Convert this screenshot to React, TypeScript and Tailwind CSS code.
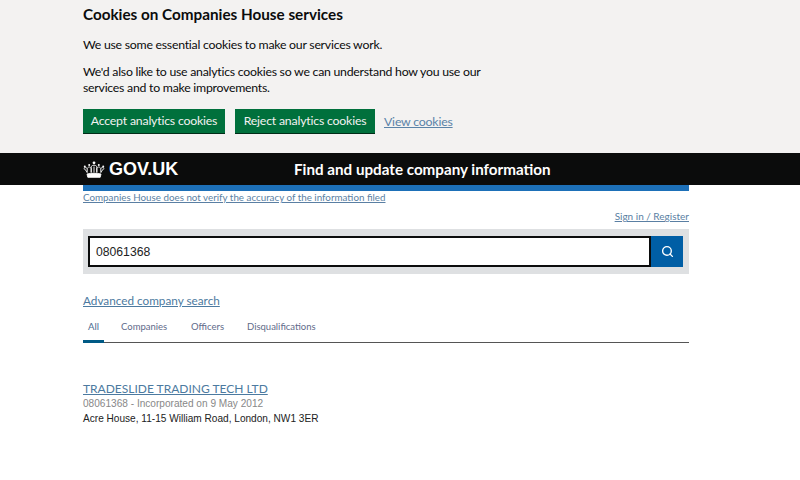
import { Search } from "lucide-react";

const GDS = { fontFamily: "Lato, 'Liberation Sans', sans-serif" };
const ARIAL = { fontFamily: "'Liberation Sans', Arial, sans-serif" };

function Crown() {
    return (
        <svg width="22" height="18" viewBox="0 0 22 18" fill="none" stroke="white" strokeWidth="0.9">
            <path d="M4 12.500C3 10.500 2 9 .8 8.500c.8-1.200 2.500-1.200 3.400 0M18 12.500c1-2 2-3.500 3.200-4-.8-1.200-2.500-1.200-3.400 0" />
            <path d="M4 14c4-1 10-1 14 0l-.8 3.300H4.800z" fill="white" />
            <path d="M4.200 12.500V8.500c1.200-2 2.800-2 4 0v4M8.200 12.500V6.500c1.500-1.800 4.100-1.800 5.600 0v6M13.800 12.500V8.500c1.200-2 2.800-2 4 0v4M11 6.500v6" />
            <circle cx="11" cy="2.800" r="1.400" fill="white" stroke="none" />
            <circle cx="6.200" cy="5" r="1" fill="white" stroke="none" />
            <circle cx="15.800" cy="5" r="1" fill="white" stroke="none" />
            <circle cx="1.800" cy="6.500" r="1" fill="white" stroke="none" />
            <circle cx="20.200" cy="6.500" r="1" fill="white" stroke="none" />
        </svg>
    );
}

function CookieBanner() {
    return (
        <div className="h-[153px] bg-[#f3f2f1] pl-[83px] pt-[4px] text-[#0b0c0c]" style={GDS}>
            <h2 className="text-[15.25px] leading-[20px] font-bold">Cookies on Companies House services</h2>
            <p className="mt-[11px] text-[12.3px] leading-[20px] tracking-[-0.25px]">We use some essential cookies to make our services work.</p>
            <p className="mt-[9px] w-[400px] text-[12.3px] leading-[16px] tracking-[-0.25px]">
                We'd also like to use analytics cookies so we can understand how you use our services and to make improvements.
            </p>
            <div className="mt-[13px] flex items-start text-[12.3px] tracking-[-0.2px]">
                <button className="h-[24px] w-[142px] whitespace-nowrap bg-[#00703c] pt-[1px] text-[#f3f2f1] shadow-[0_1px_0_#002d18]">Accept analytics cookies</button>
                <button className="ml-[10px] h-[24px] w-[140px] whitespace-nowrap bg-[#00703c] pt-[1px] text-[#f3f2f1] shadow-[0_1px_0_#002d18]">Reject analytics cookies</button>
                <a className="ml-[9px] leading-[26px] text-[#5a83a8] underline">View cookies</a>
            </div>
        </div>
    );
}

function Header() {
    return (
        <div className="flex h-[32px] items-center bg-[#0b0c0c] pl-[83px] text-white" style={GDS}>
            <div className="flex w-[211px] items-center gap-[4px]">
                <Crown />
                <span className="text-[18px] font-bold" style={ARIAL}>GOV.UK</span>
            </div>
            <span className="text-[15.2px] font-bold">Find and update company information</span>
        </div>
    );
}

export default function App() {
    return (
        <div className="h-[480px] w-[800px] overflow-hidden bg-white">
            <CookieBanner />
            <Header />
            <div className="w-[606px] ml-[83px]" style={GDS}>
                <div className="h-[6px] bg-[#1d70b8]" />
                <a className="block text-[9.8px] leading-[12px] text-[#5a7fa3] underline">Companies House does not verify the accuracy of the information filed</a>
                <div className="mt-[6px] text-right text-[10px] leading-[14px]">
                    <a className="text-[#5a7fa3] underline">Sign in / Register</a>
                </div>
                <div className="mt-[6px] flex h-[45px] items-center bg-[#dee0e2] px-[5px]">
                    <div className="flex h-[31px] flex-1 items-center border-2 border-[#0b0c0c] bg-white pl-[6px] pt-[1px] text-[12.2px] text-[#222]" style={ARIAL}>08061368</div>
                    <div className="flex h-[31px] w-[32px] items-center justify-center bg-[#005ea5]">
                        <Search size={13} strokeWidth={2.500} className="text-white" />
                    </div>
                    <div className="w-[1px]" />
                </div>
                <a className="mt-[19px] block text-[11.75px] leading-[16px] text-[#4c7aa0] underline">Advanced company search</a>
                <div className="mt-[8px] flex h-[26px] border-b border-[#555] text-[9.5px] text-[#5f6b8a]">
                    <div className="relative w-[38px] pl-[5px] pt-[3px] text-[#4a6a90]">
                        All
                        <div className="absolute bottom-[-1px] left-0 h-[3px] w-[21px] bg-[#005a85]" />
                    </div>
                    <div className="w-[70px] pt-[3px]">Companies</div>
                    <div className="w-[56px] pt-[3px]">Officers</div>
                    <div className="pt-[3px]">Disqualifications</div>
                </div>
                <div className="mt-[38px]">
                    <a className="block text-[12px] leading-[16px] text-[#4c7aa0] underline">TRADESLIDE TRADING TECH LTD</a>
                    <div className="text-[10.1px] leading-[14px] text-[#888]" style={ARIAL}>08061368 - Incorporated on 9 May 2012</div>
                    <div className="mt-[1px] text-[10.1px] leading-[14px] text-[#222]" style={ARIAL}>Acre House, 11-15 William Road, London, NW1 3ER</div>
                </div>
            </div>
        </div>
    );
}
